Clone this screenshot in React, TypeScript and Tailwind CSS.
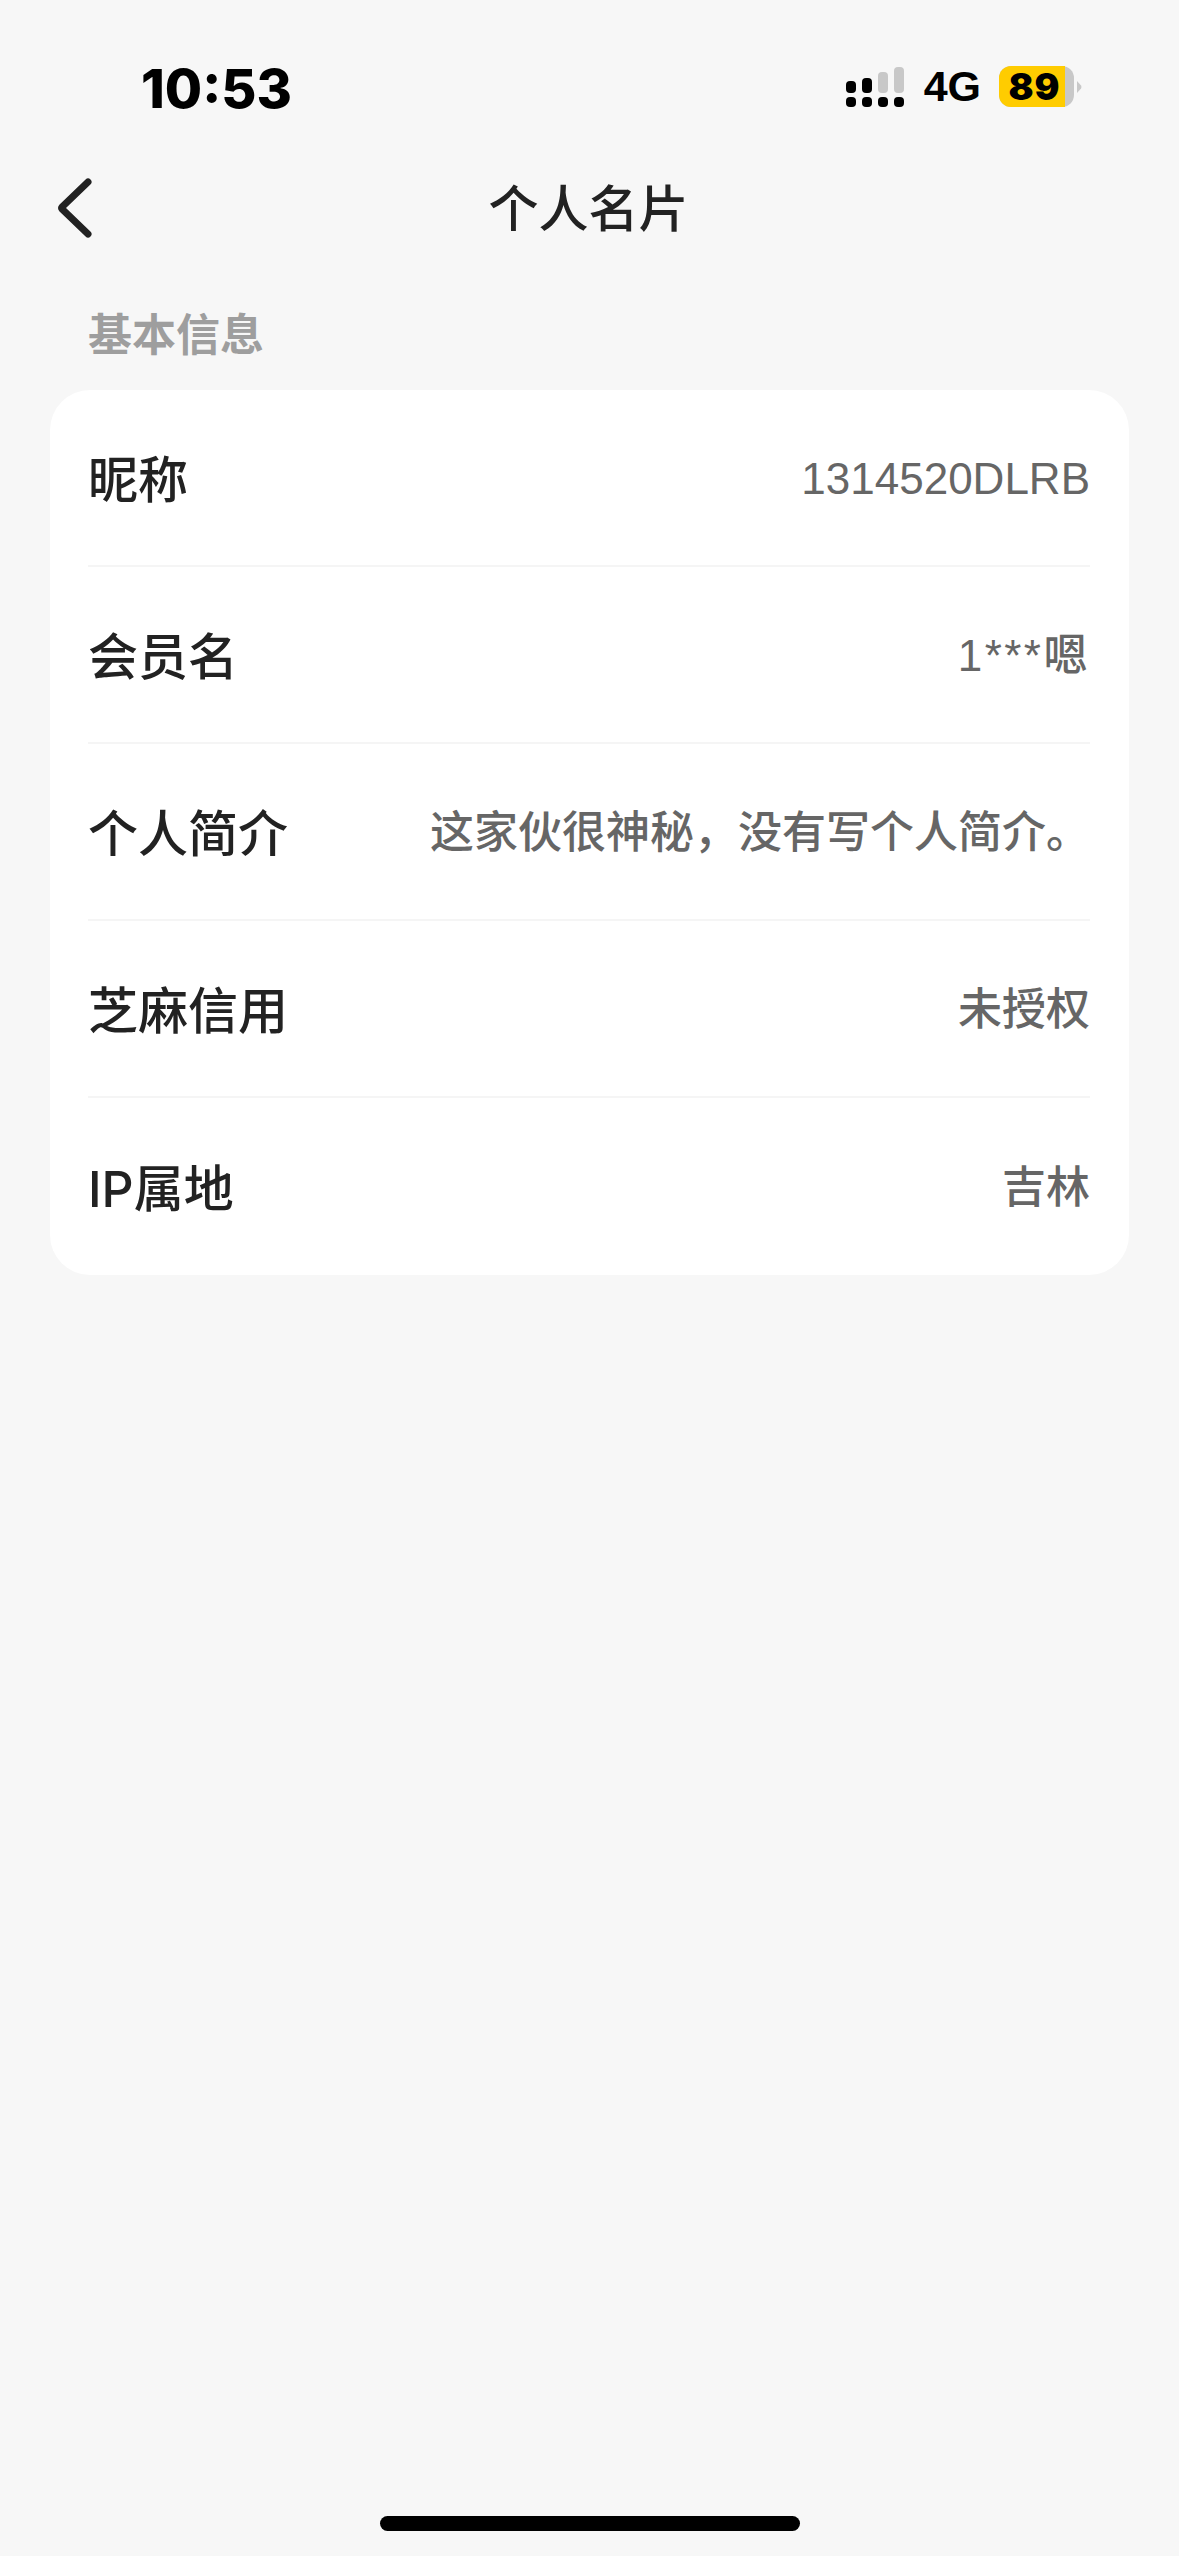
const rows = [
  { label: '昵称', value: '1314520DLRB' },
  { label: '会员名', value: '1***嗯', valueClass: 'tracking-[2.5px]' },
  { label: '个人简介', value: '这家伙很神秘\uFF0C没有写个人简介。' },
  { label: '芝麻信用', value: '未授权' },
  { label: 'IP属地', value: '吉林' },
];

const fontStack = "font-['Liberation_Sans','Noto_Sans_CJK_SC',sans-serif]";

const SignalIcon = () => (
  <svg width="60" height="42" viewBox="0 0 60 42">
    <rect x="0" y="15" width="10" height="12" rx="4" fill="#000" />
    <rect x="16" y="12" width="10" height="15" rx="4" fill="#000" />
    <rect x="32" y="6" width="10" height="21" rx="4" fill="#c8c8c8" />
    <rect x="48" y="1" width="10" height="26" rx="4" fill="#c8c8c8" />
    <rect x="0" y="31" width="10" height="10" rx="4" fill="#000" />
    <rect x="16" y="31" width="10" height="10" rx="4" fill="#000" />
    <rect x="32" y="31" width="10" height="10" rx="4" fill="#000" />
    <rect x="48" y="31" width="10" height="10" rx="4" fill="#000" />
  </svg>
);

const Battery = () => (
  <div className="flex items-center gap-[3px]">
    <div className="flex h-[41px] w-[75px] rounded-[12px] bg-[#c8c8c8]">
      <div className="flex h-full w-[66px] items-center justify-center rounded-l-[12px] bg-[#ffcc00] pl-[5px] font-['Inter',sans-serif] text-[37px] leading-none font-black tracking-[1px] text-black">
        89
      </div>
    </div>
    <svg width="5" height="12" viewBox="0 0 5 12">
      <path d="M0 0 L4 4.5 Q5 6 4 7.5 L0 12 Z" fill="#c8c8c8" />
    </svg>
  </div>
);

export default function App() {
  return (
    <div className={`flex min-h-[2556px] w-[1179px] flex-col bg-[#f7f7f7] ${fontStack}`}>
      <div className="flex h-[172px] items-start justify-between pt-[62px] pr-[97px] pl-[141px]">
        <span className="font-['Inter',sans-serif] text-[54px] leading-[54px] font-extrabold text-black">10:53</span>
        <div className="flex items-center pt-[3px]">
          <SignalIcon />
          <span className="mr-[18px] ml-[18px] font-['Liberation_Sans',sans-serif] text-[43px] leading-none font-bold text-black">4G</span>
          <Battery />
        </div>
      </div>

      <div className="relative flex h-[72px] items-center justify-center">
        <svg className="absolute top-[6px] left-[55px]" width="40" height="60" viewBox="0 0 40 60">
          <path d="M33 4 L7 29 Q6 30 7 31 L33 56" fill="none" stroke="#222222" strokeWidth="7" strokeLinecap="round" strokeLinejoin="round" />
        </svg>
        <h1 className="pt-[3px] pr-[2px] text-[50px] leading-none font-medium text-[#222222]">个人名片</h1>
      </div>

      <div className="mt-[60px] pl-[88px] text-[44px] leading-[64px] font-bold text-[#9e9e9e]">基本信息</div>

      <div className="mt-[22px] mx-[50px] rounded-[40px] bg-white pr-[39px] pl-[38px]">
        {rows.map((row, index) => (
          <div
            key={row.label}
            className={`flex h-[177px] items-center justify-between ${index < rows.length - 1 ? 'border-b-2 border-[#f5f5f5]' : ''}`}
          >
            <span className="pt-[5px] font-['Inter','Noto_Sans_CJK_SC',sans-serif] text-[50px] font-medium text-[#222222]">{row.label}</span>
            <span className={`pt-[2px] text-[44px] font-medium text-[#666666] ${row.valueClass ?? ''}`}>{row.value}</span>
          </div>
        ))}
      </div>

      <div className="mt-auto flex justify-center pb-[25px]">
        <div className="h-[15px] w-[420px] rounded-full bg-black" />
      </div>
    </div>
  );
}
